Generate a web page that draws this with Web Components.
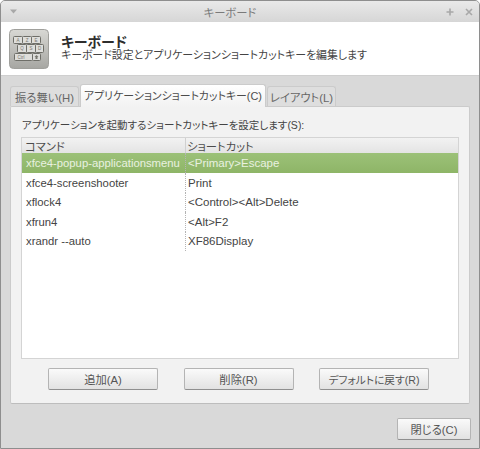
<!DOCTYPE html>
<html lang="ja">
<head>
<meta charset="utf-8">
<title>キーボード</title>
<style>
html, body { margin: 0; height: 100%; background: #fff; }
body { font: 11.3px "Liberation Sans", "Noto Sans CJK JP", sans-serif; font-feature-settings: "palt"; color: #4c4c4c; }
</style>
</head>
<body>
<kb-window></kb-window>
<script>
class KbButton extends HTMLElement {
    constructor () {
        super();
        this.attachShadow({mode: "open"});
        this.shadowRoot.innerHTML = `<style>
            :host {
                display: flex;
                justify-content: center;
                align-items: center;
                box-sizing: border-box;
                height: 22px;
                border: 1px solid #b4b4b4;
                border-bottom-color: #8f8f8f;
                border-radius: 2px;
                background: linear-gradient(#fafafa, #e2e2e2);
                color: #555;
                white-space: nowrap;
            }
        </style><slot></slot>`;
    }
}

class KbTab extends HTMLElement {
    constructor () {
        super();
        this.attachShadow({mode: "open"});
        this.shadowRoot.innerHTML = `<style>
            :host {
                display: flex;
                justify-content: center;
                align-items: center;
                box-sizing: border-box;
                height: 20px;
                margin-top: 2px;
                border: 1px solid #cbcbcb;
                border-bottom: 0;
                border-radius: 3px 3px 0 0;
                background: #dedede;
                color: #666;
                white-space: nowrap;
            }
            :host([active]) {
                height: 23px;
                margin-top: 0;
                margin-bottom: -1px;
                padding-bottom: 2px;
                color: #4c4c4c;
                font-size: 10.9px;
                position: relative;
                z-index: 1;
                background: linear-gradient(#fff, #f2f2f2);
            }
        </style><slot></slot>`;
    }
}

class KbRow extends HTMLElement {
    constructor () {
        super();
        this.attachShadow({mode: "open"});
        this.shadowRoot.innerHTML = `<style>
            :host {
                display: grid;
                grid-template-columns: 163px 1fr;
                height: 19.5px;
                align-items: stretch;
                color: #444;
            }
            :host([selected]) {
                height: 20px;
                background: linear-gradient(#9cc178, #8eb567);
                color: #e9f1e0;
            }
            .cell { display: flex; align-items: center; padding-left: 4px; white-space: nowrap; overflow: hidden; }
            .cell + .cell { border-left: 1px dotted #b4b4b4; padding-left: 2px; font-size: 11.5px; }
        </style>
        <div class="cell"><slot name="cmd"></slot></div>
        <div class="cell"><slot name="key"></slot></div>`;
    }
}

class KbShortcutList extends HTMLElement {
    constructor () {
        super();
        this.attachShadow({mode: "open"});
        this.shadowRoot.innerHTML = `<style>
            :host {
                display: block;
                box-sizing: border-box;
                height: 222px;
                border: 1px solid #d4d4d4;
                background: #fff;
            }
            .head {
                display: grid;
                grid-template-columns: 163px 1fr;
                height: 15px;
                background: linear-gradient(#f2f2f2, #e4e4e4);
                color: #4c4c4c;
            }
            .head div { display: flex; align-items: center; padding-left: 3px; }
            .head div + div { border-left: 1px solid #d0d0d0; padding-left: 1px; }
        </style>
        <div class="head"><div>コマンド</div><div>ショートカット</div></div>
        <slot></slot>`;
    }
}

class KbHeader extends HTMLElement {
    constructor () {
        super();
        this.attachShadow({mode: "open"});
        this.shadowRoot.innerHTML = `<style>
            :host {
                display: flex;
                align-items: center;
                gap: 12px;
                box-sizing: border-box;
                height: 54px;
                padding: 0 0 0 8px;
                background: #fff;
                border-bottom: 1px solid #cfcfcf;
            }
            svg { display: block; }
            svg text { font: 4.5px "Liberation Sans", sans-serif; fill: #77776f; text-anchor: middle; }
            .title { font-size: 14px; font-weight: bold; color: #2e2e2e; line-height: 14px; }
            .sub { color: #444; font-size: 10.9px; line-height: 13px; }
        </style>
        <svg width="40" height="40" viewBox="0 0 40 40">
            <defs><linearGradient id="k" x1="0" y1="0" x2="0" y2="1">
                <stop offset="0" stop-color="#d8d8d4"/><stop offset="1" stop-color="#a6a6a2"/>
            </linearGradient></defs>
            <rect x="0.5" y="0.5" width="39" height="39" rx="4" fill="url(#k)" stroke="#a0a09c"/>
            <g fill="#dededb" stroke="#6e6e68" stroke-width="1">
                <rect x="4.5" y="7.5" width="9" height="7" rx="1"/>
                <rect x="13.5" y="7.5" width="9" height="7" rx="1"/>
                <rect x="22.5" y="7.5" width="9" height="7" rx="1"/>
                <rect x="8.5" y="15.5" width="9" height="8" rx="1"/>
                <rect x="17.5" y="15.5" width="9" height="8" rx="1"/>
                <rect x="26.5" y="15.5" width="8" height="8" rx="1"/>
                <rect x="5.5" y="24.5" width="18" height="7" rx="1"/>
                <rect x="23.5" y="24.5" width="8" height="7" rx="1"/>
            </g>
            <text x="9" y="12.5">A</text><text x="18" y="12.5">Z</text><text x="27" y="12.5">E</text>
            <text x="13" y="21">Q</text><text x="22" y="21">S</text><text x="30.5" y="21">D</text>
            <text x="12" y="29.5">Ctrl</text>
            <path d="M27.5 26l2 2h-1v2h-2v-2h-1z" fill="#77776f"/>
        </svg>
        <div><div class="title">キーボード</div><div class="sub">キーボード設定とアプリケーションショートカットキーを編集します</div></div>`;
    }
}

class KbTitlebar extends HTMLElement {
    constructor () {
        super();
        this.attachShadow({mode: "open"});
        this.shadowRoot.innerHTML = `<style>
            :host {
                display: grid;
                grid-template-columns: 40px 1fr 60px;
                align-items: center;
                box-sizing: border-box;
                height: 21px;
                background: linear-gradient(#e9e9e9, #d6d6d6);
                color: #7a7a7a;
            }
            .title { text-align: center; }
            .left { padding-left: 8px; }
            .right { display: flex; justify-content: flex-end; gap: 11px; padding-right: 6px; }
            svg { display: block; }
        </style>
        <div class="left"><svg width="9" height="5" viewBox="0 0 9 5"><path d="M1 0.5h7L4.5 4.5z" fill="#a8a8a8"/></svg></div>
        <div class="title">キーボード</div>
        <div class="right">
            <svg width="8" height="8" viewBox="0 0 8 8"><path d="M4 0.5v7M0.5 4h7" stroke="#a8a8a8" stroke-width="1.6"/></svg>
            <svg width="8" height="8" viewBox="0 0 8 8"><path d="M1 1l6 6M7 1l-6 6" stroke="#a8a8a8" stroke-width="1.6"/></svg>
        </div>`;
    }
}

class KbWindow extends HTMLElement {
    constructor () {
        super();
        this.attachShadow({mode: "open"});
        this.shadowRoot.innerHTML = `<style>
            :host {
                display: flex;
                flex-direction: column;
                box-sizing: border-box;
                width: 480px;
                height: 449px;
                border: 1px solid #8e8e8e;
                border-radius: 5px 5px 0 0;
                background: #d9d9d9;
                overflow: hidden;
            }
            .body { padding: 8px 9px 0; }
            .tabs { display: grid; grid-template-columns: 69px 186px 69px; gap: 1px; height: 22px; }
            .panel {
                box-sizing: border-box;
                height: 298px;
                padding: 11px 10px 0;
                background: #f2f2f2;
                border: 1px solid #cbcbcb;
                border-bottom-color: #bdbdbd;
                border-radius: 2px;
            }
            .label { height: 19px; padding-left: 1px; color: #444; font-size: 10.5px; line-height: 14px; white-space: nowrap; }
            .buttons {
                display: grid;
                grid-template-columns: 110px 110px 110px;
                gap: 25.5px;
                margin: 9px 0 0 27px;
            }
            .narrow { font-size: 10.7px; }
            .footer { display: flex; justify-content: flex-end; padding: 14px 8px 0 0; }
            .footer kb-button { width: 74px; }
        </style>
        <kb-titlebar></kb-titlebar>
        <kb-header></kb-header>
        <div class="body">
            <div class="tabs">
                <kb-tab>振る舞い(H)</kb-tab>
                <kb-tab active>アプリケーションショートカットキー(C)</kb-tab>
                <kb-tab>レイアウト(L)</kb-tab>
            </div>
            <div class="panel">
                <div class="label">アプリケーションを起動するショートカットキーを設定します(S):</div>
                <kb-shortcut-list>
                    <kb-row selected><span slot="cmd">xfce4-popup-applicationsmenu</span><span slot="key">&lt;Primary&gt;Escape</span></kb-row>
                    <kb-row><span slot="cmd">xfce4-screenshooter</span><span slot="key">Print</span></kb-row>
                    <kb-row><span slot="cmd">xflock4</span><span slot="key">&lt;Control&gt;&lt;Alt&gt;Delete</span></kb-row>
                    <kb-row><span slot="cmd">xfrun4</span><span slot="key">&lt;Alt&gt;F2</span></kb-row>
                    <kb-row><span slot="cmd">xrandr --auto</span><span slot="key">XF86Display</span></kb-row>
                </kb-shortcut-list>
                <div class="buttons">
                    <kb-button>追加(A)</kb-button>
                    <kb-button>削除(R)</kb-button>
                    <kb-button class="narrow">デフォルトに戻す(R)</kb-button>
                </div>
            </div>
        </div>
        <div class="footer"><kb-button>閉じる(C)</kb-button></div>`;
    }
}

customElements.define("kb-button", KbButton);
customElements.define("kb-tab", KbTab);
customElements.define("kb-row", KbRow);
customElements.define("kb-shortcut-list", KbShortcutList);
customElements.define("kb-header", KbHeader);
customElements.define("kb-titlebar", KbTitlebar);
customElements.define("kb-window", KbWindow);
</script>
</body>
</html>
